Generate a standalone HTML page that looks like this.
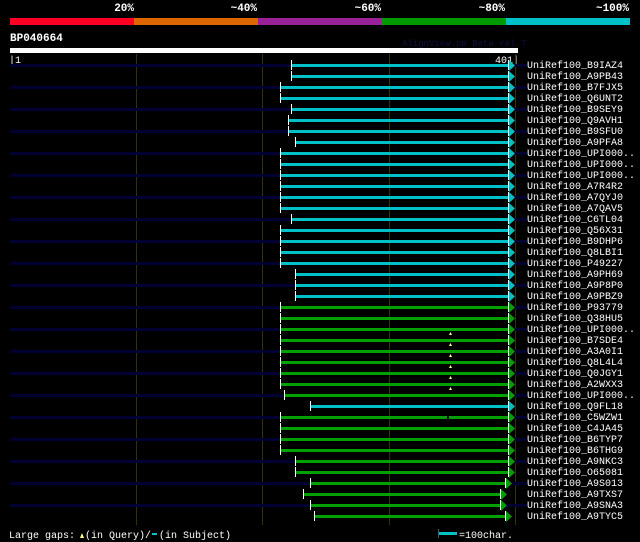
<!DOCTYPE html>
<html><head><meta charset="utf-8"><style>
html,body{margin:0;padding:0;background:#000;width:640px;height:542px;overflow:hidden}
svg{display:block}
text{font-family:"Liberation Mono","DejaVu Sans Mono",monospace}
.l{fill:#fff;font-size:10px}
.h{fill:#fff;font-size:11px;font-weight:bold}
.c{fill:#00c0c8}.g{fill:#00a000}.d{fill:#000033}.w{fill:#fff}
</style></head><body>
<svg width="640" height="542" xmlns="http://www.w3.org/2000/svg">
<rect width="640" height="542" fill="#000"/>
<text class="h" x="134" y="11" text-anchor="end">20%</text>
<text class="h" x="257" y="11" text-anchor="end">~40%</text>
<text class="h" x="381" y="11" text-anchor="end">~60%</text>
<text class="h" x="505" y="11" text-anchor="end">~80%</text>
<text class="h" x="629" y="11" text-anchor="end">~100%</text>
<rect x="10" y="18" width="124" height="7" fill="#ff0022"/>
<rect x="134" y="18" width="124" height="7" fill="#dd6600"/>
<rect x="258" y="18" width="124" height="7" fill="#992299"/>
<rect x="382" y="18" width="124" height="7" fill="#009900"/>
<rect x="506" y="18" width="124" height="7" fill="#00c0c8"/>
<text class="h" x="10" y="41">BP040664</text>
<text x="402" y="46" fill="#101040" style="font-size:9px">AlignView.pm Beta rel.7</text>
<rect x="10" y="48" width="508" height="5" fill="#fff"/>
<text class="l" x="9" y="63">|1</text>
<text class="l" x="519" y="63" text-anchor="end">401|</text>
<g stroke="#333300" stroke-width="1">
<line x1="136.5" y1="54" x2="136.5" y2="525"/><line x1="262.5" y1="54" x2="262.5" y2="525"/>
<line x1="389.5" y1="54" x2="389.5" y2="525"/><line x1="515.5" y1="54" x2="515.5" y2="525"/>
</g>

<g transform="translate(0,64)"><rect class="d" x="10" width="281" height="3"/><rect class="d" x="515" width="12" height="3"/><rect class="c" x="291" width="217" height="3"/><rect class="w" x="291" y="-4" width="1" height="10"/><rect class="w" x="508" y="-4" width="1" height="10"/><polygon class="c" points="509,-4 515,1.5 509,7"/></g>
<g transform="translate(0,75)"><rect class="c" x="291" width="217" height="3"/><rect class="w" x="291" y="-4" width="1" height="10"/><rect class="w" x="508" y="-4" width="1" height="10"/><polygon class="c" points="509,-4 515,1.5 509,7"/></g>
<g transform="translate(0,86)"><rect class="d" x="10" width="270" height="3"/><rect class="d" x="515" width="12" height="3"/><rect class="c" x="280" width="228" height="3"/><rect class="w" x="280" y="-4" width="1" height="10"/><rect class="w" x="508" y="-4" width="1" height="10"/><polygon class="c" points="509,-4 515,1.5 509,7"/></g>
<g transform="translate(0,97)"><rect class="c" x="280" width="228" height="3"/><rect class="w" x="280" y="-4" width="1" height="10"/><rect class="w" x="508" y="-4" width="1" height="10"/><polygon class="c" points="509,-4 515,1.5 509,7"/></g>
<g transform="translate(0,108)"><rect class="d" x="10" width="281" height="3"/><rect class="d" x="515" width="12" height="3"/><rect class="c" x="291" width="217" height="3"/><rect class="w" x="291" y="-4" width="1" height="10"/><rect class="w" x="508" y="-4" width="1" height="10"/><polygon class="c" points="509,-4 515,1.5 509,7"/></g>
<g transform="translate(0,119)"><rect class="c" x="288" width="220" height="3"/><rect class="w" x="288" y="-4" width="1" height="10"/><rect class="w" x="508" y="-4" width="1" height="10"/><polygon class="c" points="509,-4 515,1.5 509,7"/></g>
<g transform="translate(0,130)"><rect class="d" x="10" width="278" height="3"/><rect class="d" x="515" width="12" height="3"/><rect class="c" x="288" width="220" height="3"/><rect class="w" x="288" y="-4" width="1" height="10"/><rect class="w" x="508" y="-4" width="1" height="10"/><polygon class="c" points="509,-4 515,1.5 509,7"/></g>
<g transform="translate(0,141)"><rect class="c" x="295" width="213" height="3"/><rect class="w" x="295" y="-4" width="1" height="10"/><rect class="w" x="508" y="-4" width="1" height="10"/><polygon class="c" points="509,-4 515,1.5 509,7"/></g>
<g transform="translate(0,152)"><rect class="d" x="10" width="270" height="3"/><rect class="d" x="515" width="12" height="3"/><rect class="c" x="280" width="228" height="3"/><rect class="w" x="280" y="-4" width="1" height="10"/><rect class="w" x="508" y="-4" width="1" height="10"/><polygon class="c" points="509,-4 515,1.5 509,7"/></g>
<g transform="translate(0,163)"><rect class="c" x="280" width="228" height="3"/><rect class="w" x="280" y="-4" width="1" height="10"/><rect class="w" x="508" y="-4" width="1" height="10"/><polygon class="c" points="509,-4 515,1.5 509,7"/></g>
<g transform="translate(0,174)"><rect class="d" x="10" width="270" height="3"/><rect class="d" x="515" width="12" height="3"/><rect class="c" x="280" width="228" height="3"/><rect class="w" x="280" y="-4" width="1" height="10"/><rect class="w" x="508" y="-4" width="1" height="10"/><polygon class="c" points="509,-4 515,1.5 509,7"/></g>
<g transform="translate(0,185)"><rect class="c" x="280" width="228" height="3"/><rect class="w" x="280" y="-4" width="1" height="10"/><rect class="w" x="508" y="-4" width="1" height="10"/><polygon class="c" points="509,-4 515,1.5 509,7"/></g>
<g transform="translate(0,196)"><rect class="d" x="10" width="270" height="3"/><rect class="d" x="515" width="12" height="3"/><rect class="c" x="280" width="228" height="3"/><rect class="w" x="280" y="-4" width="1" height="10"/><rect class="w" x="508" y="-4" width="1" height="10"/><polygon class="c" points="509,-4 515,1.5 509,7"/></g>
<g transform="translate(0,207)"><rect class="c" x="280" width="228" height="3"/><rect class="w" x="280" y="-4" width="1" height="10"/><rect class="w" x="508" y="-4" width="1" height="10"/><polygon class="c" points="509,-4 515,1.5 509,7"/></g>
<g transform="translate(0,218)"><rect class="d" x="10" width="281" height="3"/><rect class="d" x="515" width="12" height="3"/><rect class="c" x="291" width="217" height="3"/><rect class="w" x="291" y="-4" width="1" height="10"/><rect class="w" x="508" y="-4" width="1" height="10"/><polygon class="c" points="509,-4 515,1.5 509,7"/></g>
<g transform="translate(0,229)"><rect class="c" x="280" width="228" height="3"/><rect class="w" x="280" y="-4" width="1" height="10"/><rect class="w" x="508" y="-4" width="1" height="10"/><polygon class="c" points="509,-4 515,1.5 509,7"/></g>
<g transform="translate(0,240)"><rect class="d" x="10" width="270" height="3"/><rect class="d" x="515" width="12" height="3"/><rect class="c" x="280" width="228" height="3"/><rect class="w" x="280" y="-4" width="1" height="10"/><rect class="w" x="508" y="-4" width="1" height="10"/><polygon class="c" points="509,-4 515,1.5 509,7"/></g>
<g transform="translate(0,251)"><rect class="c" x="280" width="228" height="3"/><rect class="w" x="280" y="-4" width="1" height="10"/><rect class="w" x="508" y="-4" width="1" height="10"/><polygon class="c" points="509,-4 515,1.5 509,7"/></g>
<g transform="translate(0,262)"><rect class="d" x="10" width="270" height="3"/><rect class="d" x="515" width="12" height="3"/><rect class="c" x="280" width="228" height="3"/><rect class="w" x="280" y="-4" width="1" height="10"/><rect class="w" x="508" y="-4" width="1" height="10"/><polygon class="c" points="509,-4 515,1.5 509,7"/></g>
<g transform="translate(0,273)"><rect class="c" x="295" width="213" height="3"/><rect class="w" x="295" y="-4" width="1" height="10"/><rect class="w" x="508" y="-4" width="1" height="10"/><polygon class="c" points="509,-4 515,1.5 509,7"/></g>
<g transform="translate(0,284)"><rect class="d" x="10" width="285" height="3"/><rect class="d" x="515" width="12" height="3"/><rect class="c" x="295" width="213" height="3"/><rect class="w" x="295" y="-4" width="1" height="10"/><rect class="w" x="508" y="-4" width="1" height="10"/><polygon class="c" points="509,-4 515,1.5 509,7"/></g>
<g transform="translate(0,295)"><rect class="c" x="295" width="213" height="3"/><rect class="w" x="295" y="-4" width="1" height="10"/><rect class="w" x="508" y="-4" width="1" height="10"/><polygon class="c" points="509,-4 515,1.5 509,7"/></g>
<g transform="translate(0,306)"><rect class="d" x="10" width="270" height="3"/><rect class="d" x="515" width="12" height="3"/><rect class="g" x="280" width="228" height="3"/><rect class="w" x="280" y="-4" width="1" height="10"/><rect class="w" x="508" y="-4" width="1" height="10"/><polygon class="g" points="509,-4 515,1.5 509,7"/></g>
<g transform="translate(0,317)"><rect class="g" x="280" width="228" height="3"/><rect class="w" x="280" y="-4" width="1" height="10"/><rect class="w" x="508" y="-4" width="1" height="10"/><polygon class="g" points="509,-4 515,1.5 509,7"/></g>
<g transform="translate(0,328)"><rect class="d" x="10" width="270" height="3"/><rect class="d" x="515" width="12" height="3"/><rect class="g" x="280" width="228" height="3"/><rect class="w" x="280" y="-4" width="1" height="10"/><rect class="w" x="508" y="-4" width="1" height="10"/><polygon class="g" points="509,-4 515,1.5 509,7"/><polygon fill="#ffff88" points="449,7 450.5,4 452,7"/></g>
<g transform="translate(0,339)"><rect class="g" x="280" width="228" height="3"/><rect class="w" x="280" y="-4" width="1" height="10"/><rect class="w" x="508" y="-4" width="1" height="10"/><polygon class="g" points="509,-4 515,1.5 509,7"/><polygon fill="#ffff88" points="449,7 450.5,4 452,7"/></g>
<g transform="translate(0,350)"><rect class="d" x="10" width="270" height="3"/><rect class="d" x="515" width="12" height="3"/><rect class="g" x="280" width="228" height="3"/><rect class="w" x="280" y="-4" width="1" height="10"/><rect class="w" x="508" y="-4" width="1" height="10"/><polygon class="g" points="509,-4 515,1.5 509,7"/><polygon fill="#ffff88" points="449,7 450.5,4 452,7"/></g>
<g transform="translate(0,361)"><rect class="g" x="280" width="228" height="3"/><rect class="w" x="280" y="-4" width="1" height="10"/><rect class="w" x="508" y="-4" width="1" height="10"/><polygon class="g" points="509,-4 515,1.5 509,7"/><polygon fill="#ffff88" points="449,7 450.5,4 452,7"/></g>
<g transform="translate(0,372)"><rect class="d" x="10" width="270" height="3"/><rect class="d" x="515" width="12" height="3"/><rect class="g" x="280" width="228" height="3"/><rect class="w" x="280" y="-4" width="1" height="10"/><rect class="w" x="508" y="-4" width="1" height="10"/><polygon class="g" points="509,-4 515,1.5 509,7"/><polygon fill="#ffff88" points="449,7 450.5,4 452,7"/></g>
<g transform="translate(0,383)"><rect class="g" x="280" width="228" height="3"/><rect class="w" x="280" y="-4" width="1" height="10"/><rect class="w" x="508" y="-4" width="1" height="10"/><polygon class="g" points="509,-4 515,1.5 509,7"/><polygon fill="#ffff88" points="449,7 450.5,4 452,7"/></g>
<g transform="translate(0,394)"><rect class="d" x="10" width="274" height="3"/><rect class="d" x="515" width="12" height="3"/><rect class="g" x="284" width="224" height="3"/><rect class="w" x="284" y="-4" width="1" height="10"/><rect class="w" x="508" y="-4" width="1" height="10"/><polygon class="g" points="509,-4 515,1.5 509,7"/></g>
<g transform="translate(0,405)"><rect class="c" x="310" width="198" height="3"/><rect class="w" x="310" y="-4" width="1" height="10"/><rect class="w" x="508" y="-4" width="1" height="10"/><polygon class="c" points="509,-4 515,1.5 509,7"/></g>
<g transform="translate(0,416)"><rect class="d" x="10" width="270" height="3"/><rect class="d" x="515" width="12" height="3"/><rect class="g" x="280" width="228" height="3"/><rect fill="#000" x="447" width="2" height="3"/><rect class="w" x="280" y="-4" width="1" height="10"/><rect class="w" x="508" y="-4" width="1" height="10"/><polygon class="g" points="509,-4 515,1.5 509,7"/></g>
<g transform="translate(0,427)"><rect class="g" x="280" width="228" height="3"/><rect class="w" x="280" y="-4" width="1" height="10"/><rect class="w" x="508" y="-4" width="1" height="10"/><polygon class="g" points="509,-4 515,1.5 509,7"/></g>
<g transform="translate(0,438)"><rect class="d" x="10" width="270" height="3"/><rect class="d" x="515" width="12" height="3"/><rect class="g" x="280" width="228" height="3"/><rect class="w" x="280" y="-4" width="1" height="10"/><rect class="w" x="508" y="-4" width="1" height="10"/><polygon class="g" points="509,-4 515,1.5 509,7"/></g>
<g transform="translate(0,449)"><rect class="g" x="280" width="228" height="3"/><rect class="w" x="280" y="-4" width="1" height="10"/><rect class="w" x="508" y="-4" width="1" height="10"/><polygon class="g" points="509,-4 515,1.5 509,7"/></g>
<g transform="translate(0,460)"><rect class="d" x="10" width="285" height="3"/><rect class="d" x="515" width="12" height="3"/><rect class="g" x="295" width="213" height="3"/><rect class="w" x="295" y="-4" width="1" height="10"/><rect class="w" x="508" y="-4" width="1" height="10"/><polygon class="g" points="509,-4 515,1.5 509,7"/></g>
<g transform="translate(0,471)"><rect class="g" x="295" width="213" height="3"/><rect class="w" x="295" y="-4" width="1" height="10"/><rect class="w" x="508" y="-4" width="1" height="10"/><polygon class="g" points="509,-4 515,1.5 509,7"/></g>
<g transform="translate(0,482)"><rect class="d" x="10" width="300" height="3"/><rect class="d" x="512" width="15" height="3"/><rect class="g" x="310" width="195" height="3"/><rect class="w" x="310" y="-4" width="1" height="10"/><rect class="w" x="505" y="-4" width="1" height="10"/><polygon class="g" points="506,-4 512,1.5 506,7"/></g>
<g transform="translate(0,493)"><rect class="g" x="303" width="197" height="3"/><rect class="w" x="303" y="-4" width="1" height="10"/><rect class="w" x="500" y="-4" width="1" height="10"/><polygon class="g" points="501,-4 507,1.5 501,7"/></g>
<g transform="translate(0,504)"><rect class="d" x="10" width="300" height="3"/><rect class="d" x="507" width="20" height="3"/><rect class="g" x="310" width="190" height="3"/><rect class="w" x="310" y="-4" width="1" height="10"/><rect class="w" x="500" y="-4" width="1" height="10"/><polygon class="g" points="501,-4 507,1.5 501,7"/></g>
<g transform="translate(0,515)"><rect class="g" x="314" width="191" height="3"/><rect class="w" x="314" y="-4" width="1" height="10"/><rect class="w" x="505" y="-4" width="1" height="10"/><polygon class="g" points="506,-4 512,1.5 506,7"/></g>

<g class="l">
<text x="527" y="68">UniRef100_B9IAZ4</text><text x="527" y="79">UniRef100_A9PB43</text><text x="527" y="90">UniRef100_B7FJX5</text><text x="527" y="101">UniRef100_Q6UNT2</text><text x="527" y="112">UniRef100_B9SEY9</text><text x="527" y="123">UniRef100_Q9AVH1</text><text x="527" y="134">UniRef100_B9SFU0</text><text x="527" y="145">UniRef100_A9PFA8</text><text x="527" y="156">UniRef100_UPI000..</text><text x="527" y="167">UniRef100_UPI000..</text><text x="527" y="178">UniRef100_UPI000..</text><text x="527" y="189">UniRef100_A7R4R2</text><text x="527" y="200">UniRef100_A7QYJ0</text><text x="527" y="211">UniRef100_A7QAV5</text><text x="527" y="222">UniRef100_C6TL04</text><text x="527" y="233">UniRef100_Q56X31</text><text x="527" y="244">UniRef100_B9DHP6</text><text x="527" y="255">UniRef100_Q8LBI1</text><text x="527" y="266">UniRef100_P49227</text><text x="527" y="277">UniRef100_A9PH69</text><text x="527" y="288">UniRef100_A9P8P0</text><text x="527" y="299">UniRef100_A9PBZ9</text><text x="527" y="310">UniRef100_P93779</text><text x="527" y="321">UniRef100_Q38HU5</text><text x="527" y="332">UniRef100_UPI000..</text><text x="527" y="343">UniRef100_B7SDE4</text><text x="527" y="354">UniRef100_A3A0I1</text><text x="527" y="365">UniRef100_Q8L4L4</text><text x="527" y="376">UniRef100_Q0JGY1</text><text x="527" y="387">UniRef100_A2WXX3</text><text x="527" y="398">UniRef100_UPI000..</text><text x="527" y="409">UniRef100_Q9FL18</text><text x="527" y="420">UniRef100_C5WZW1</text><text x="527" y="431">UniRef100_C4JA45</text><text x="527" y="442">UniRef100_B6TYP7</text><text x="527" y="453">UniRef100_B6THG9</text><text x="527" y="464">UniRef100_A9NKC3</text><text x="527" y="475">UniRef100_O65081</text><text x="527" y="486">UniRef100_A9S013</text><text x="527" y="497">UniRef100_A9TXS7</text><text x="527" y="508">UniRef100_A9SNA3</text><text x="527" y="519">UniRef100_A9TYC5</text>
</g>
<text class="l" x="9" y="538">Large gaps:</text>
<polygon points="80,538 82,533 84,538" fill="#ffff88"/>
<text class="l" x="85" y="538">(in Query)/</text>
<rect x="152" y="533" width="5" height="2" fill="#00c0c8"/>
<text class="l" x="159" y="538">(in Subject)</text>
<line x1="438.5" y1="529" x2="438.5" y2="538" stroke="#555"/>
<rect x="439" y="532" width="18" height="3" fill="#00c0c8"/>
<text class="l" x="459" y="538">=100char.</text>
</svg>
</body></html>
